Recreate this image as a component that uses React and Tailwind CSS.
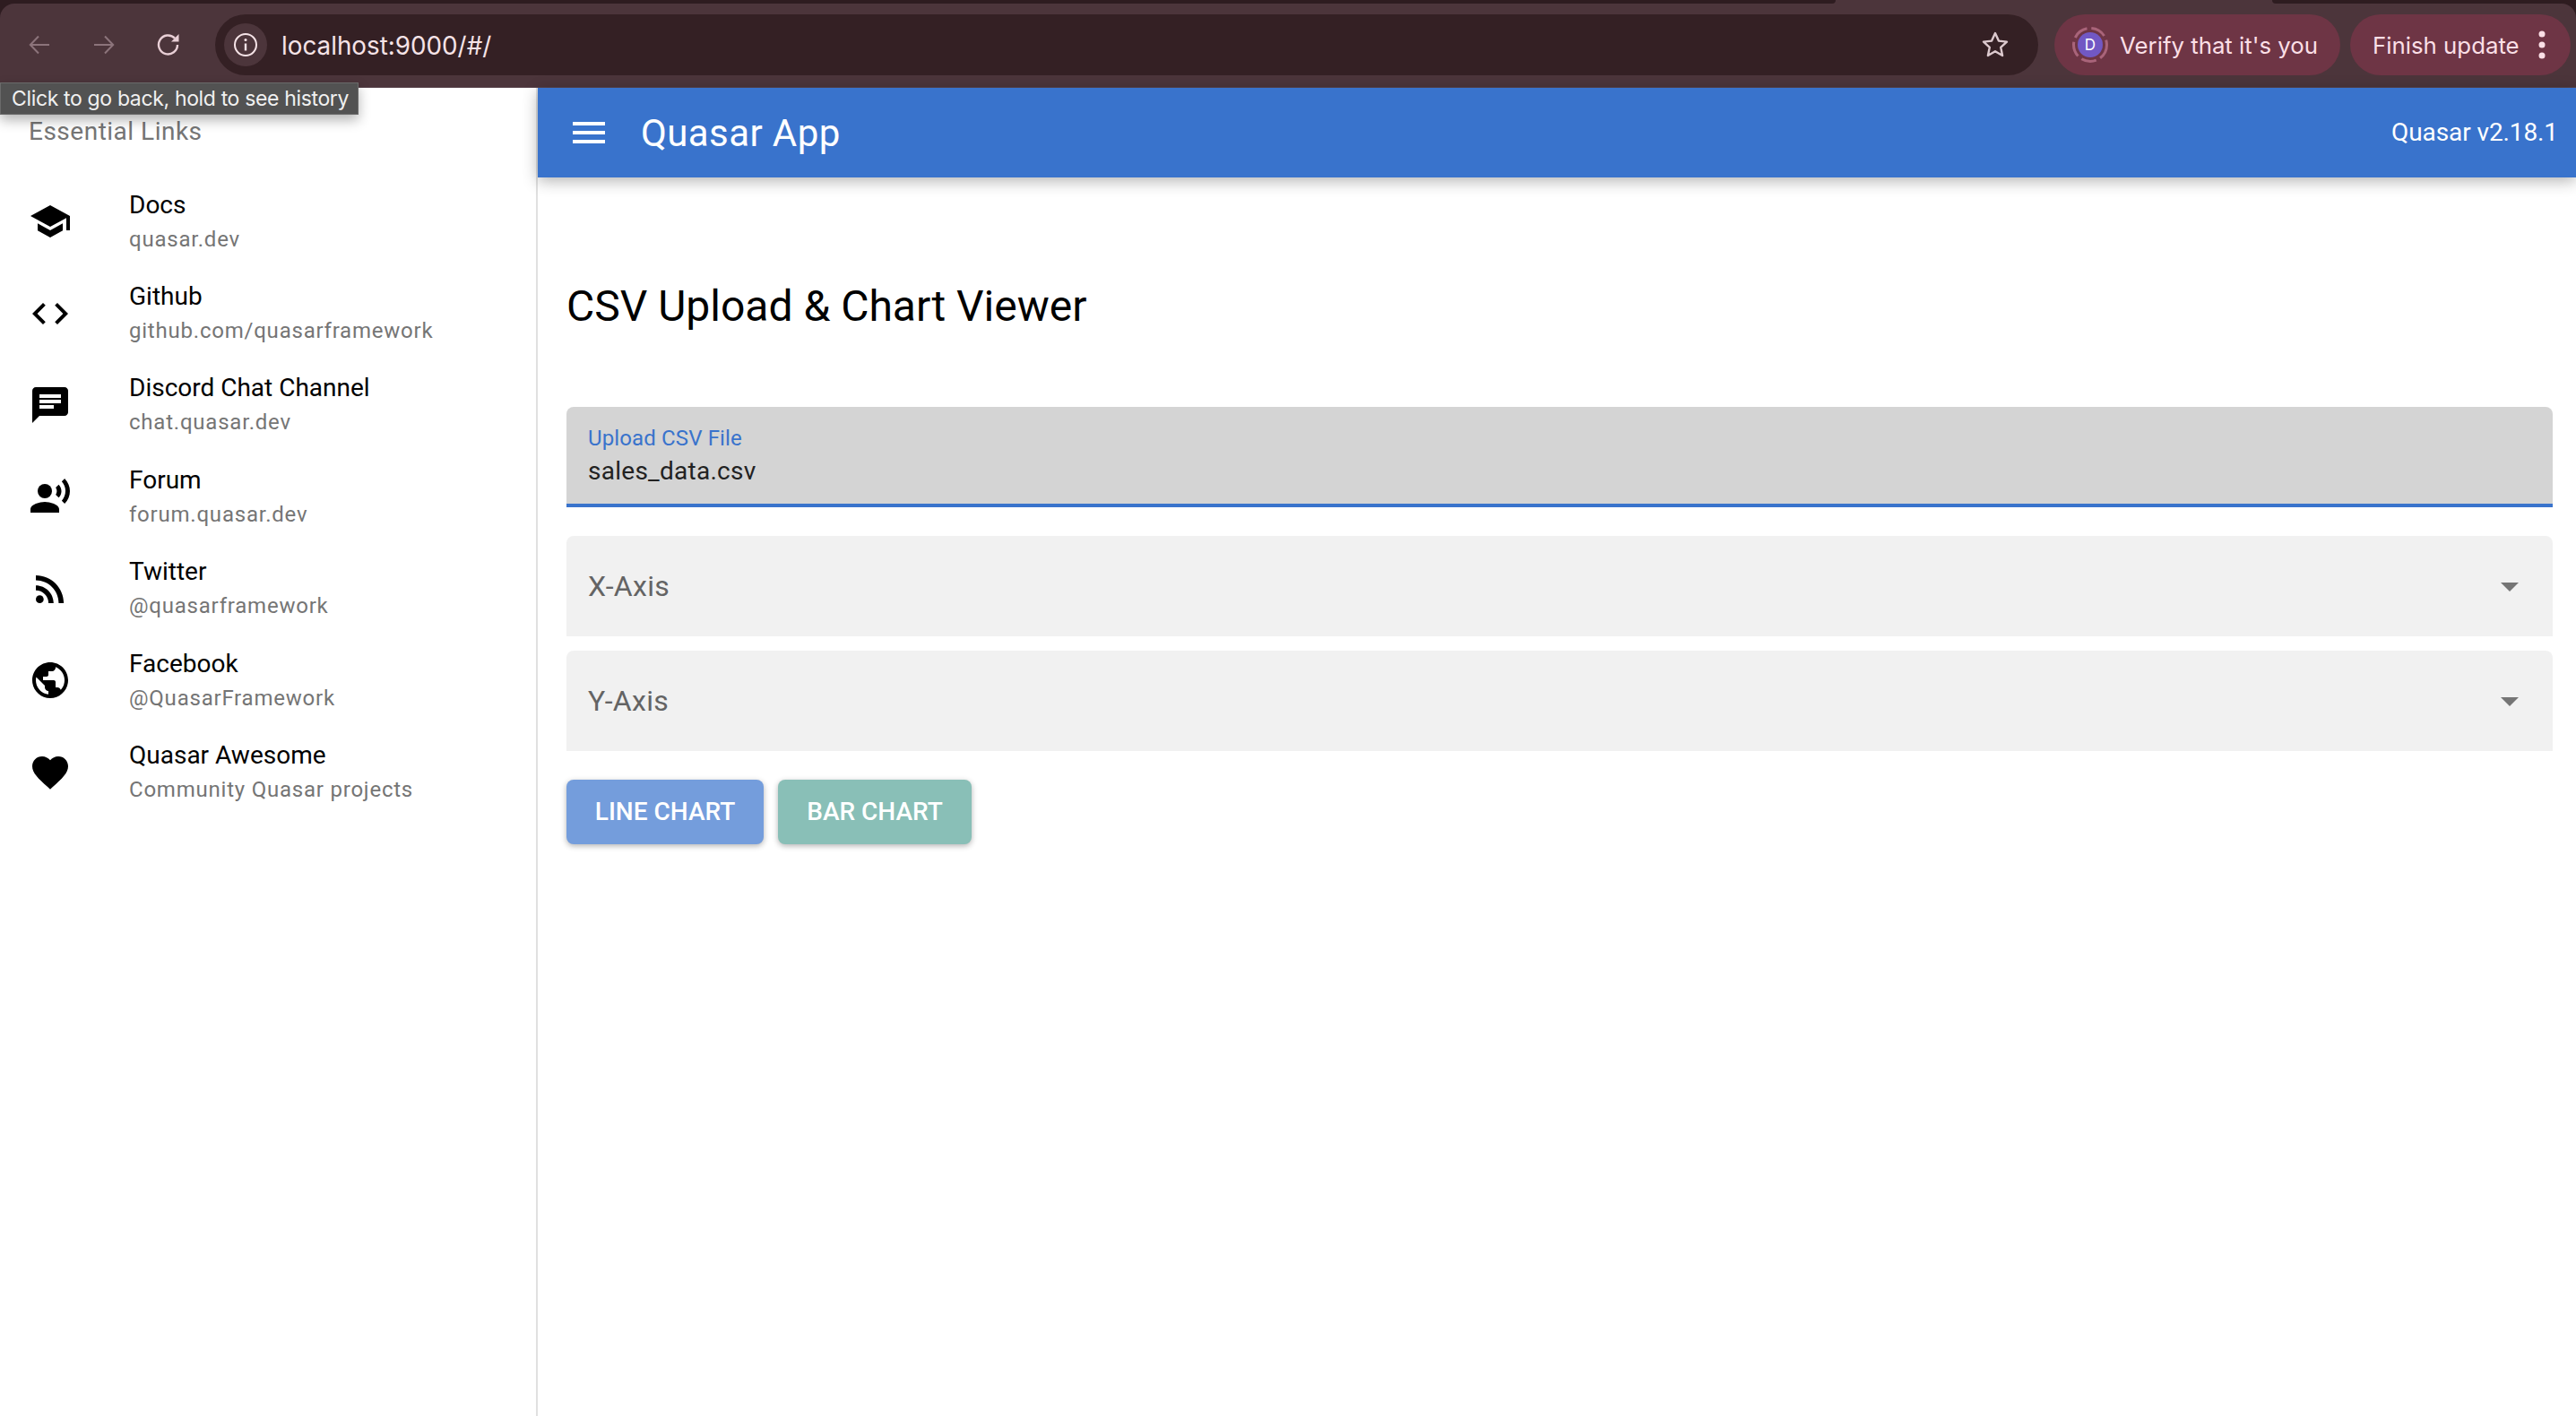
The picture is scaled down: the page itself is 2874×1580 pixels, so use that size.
import React from 'react';

const links = [
  { title: 'Docs', caption: 'quasar.dev', icon: 'school' },
  { title: 'Github', caption: 'github.com/quasarframework', icon: 'code' },
  { title: 'Discord Chat Channel', caption: 'chat.quasar.dev', icon: 'chat' },
  { title: 'Forum', caption: 'forum.quasar.dev', icon: 'voice' },
  { title: 'Twitter', caption: '@quasarframework', icon: 'rss' },
  { title: 'Facebook', caption: '@QuasarFramework', icon: 'public' },
  { title: 'Quasar Awesome', caption: 'Community Quasar projects', icon: 'favorite' },
];

// material icon shapes
const MaterialIcon = ({ name }) => (
  <svg viewBox="0 0 24 24" className="w-12 h-12 shrink-0" fill="currentColor">
    {name === 'school' && <path d="M5 13.18v4L12 21l7-3.82v-4L12 17l-7-3.82zM12 3L1 9l11 6 9-4.91V17h2V9L12 3z" />}
    {name === 'code' && <path d="M9.4 16.6L4.8 12l4.6-4.6L8 6l-6 6 6 6 1.4-1.4zm5.2 0l4.6-4.6-4.6-4.6L16 6l6 6-6 6-1.4-1.4z" />}
    {name === 'chat' && <path d="M20 2H4c-1.1 0-1.99.9-1.99 2L2 22l4-4h14c1.1 0 2-.9 2-2V4c0-1.1-.9-2-2-2zM6 9h12v2H6V9zm8 5H6v-2h8v2zm4-6H6V6h12v2z" />}
    {name === 'voice' && (
      <>
        <circle cx="9" cy="9" r="4" />
        <path d="M9 15c-2.67 0-8 1.34-8 4v2h16v-2c0-2.66-5.33-4-8-4zm7.76-9.64l-1.68 1.69c.84 1.18.84 2.71 0 3.89l1.68 1.69c2.02-2.02 2.02-5.07 0-7.27zM20.07 2l-1.63 1.63c2.77 3.02 2.77 7.56 0 10.74L20.07 16c3.9-3.89 3.91-9.95 0-14z" />
      </>
    )}
    {name === 'rss' && (
      <>
        <circle cx="6.18" cy="17.82" r="2.18" />
        <path d="M4 4.44v2.83c7.03 0 12.73 5.7 12.73 12.73h2.83c0-8.59-6.97-15.56-15.56-15.56zm0 5.66v2.83c3.9 0 7.07 3.17 7.07 7.07h2.83c0-5.47-4.43-9.9-9.9-9.9z" />
      </>
    )}
    {name === 'public' && <path d="M12 2C6.48 2 2 6.48 2 12s4.48 10 10 10 10-4.48 10-10S17.52 2 12 2zm-1 17.93c-3.95-.49-7-3.85-7-7.93 0-.62.08-1.21.21-1.79L9 15v1c0 1.1.9 2 2 2v1.93zm6.9-2.54c-.26-.81-1-1.39-1.9-1.39h-1v-3c0-.55-.45-1-1-1H8v-2h2c.55 0 1-.45 1-1V7h2c1.1 0 2-.9 2-2v-.41c2.93 1.19 5 4.06 5 7.41 0 2.08-.8 3.97-2.1 5.39z" />}
    {name === 'favorite' && <path d="M12 21.35l-1.45-1.32C5.4 15.36 2 12.28 2 8.5 2 5.42 4.42 3 7.5 3c1.74 0 3.41.81 4.5 2.09C13.09 3.81 14.76 3 16.5 3 19.58 3 22 5.42 22 8.5c0 3.78-3.4 6.86-8.55 11.54L12 21.35z" />}
  </svg>
);

const BrowserBar = () => (
  <div className="h-[98px] bg-[#2e1c20] font-['Inter',sans-serif]">
    <div className="h-1 flex bg-[#4c353b]">
      <div className="w-[2048px] bg-[#2e1c20] rounded-br-[6px]" />
      <div className="ml-[487px] flex-1 bg-[#2e1c20] rounded-bl-[6px]" />
    </div>
    <div className="h-[94px] pb-[14px] pt-3 pl-[32px] pr-[6px] flex items-center bg-[#4c353b] rounded-t-[16px] border-b border-[#57424a]">
      <svg viewBox="0 0 24 24" className="w-6 h-6 shrink-0 text-[#8c747b]" fill="none" stroke="currentColor" strokeWidth="2">
        <path d="M23 12H2M11 2.5L1.8 12l9.2 9.500" />
      </svg>
      <svg viewBox="0 0 24 24" className="w-6 h-6 ml-12 shrink-0 text-[#8c747b]" fill="none" stroke="currentColor" strokeWidth="2">
        <path d="M1 12h21M13 2.500l9.200 9.500-9.200 9.500" />
      </svg>
      <svg viewBox="0 0 26 26" className="w-[26px] h-[26px] ml-[47px] shrink-0 text-[#e9cfd6]" fill="none" stroke="currentColor" strokeWidth="2.400">
        <path d="M23 13a10.500 10.500 0 1 1-3-7.400" />
        <path d="M24.500 1v8.500H16" fill="currentColor" stroke="none" />
      </svg>
      {/* omnibox */}
      <div className="ml-[39px] w-[2034px] h-[68px] rounded-full bg-[#342024] flex items-center pl-[10px] pr-[32px] shrink-0">
        <div className="w-12 h-12 rounded-full bg-[#4c353b] flex items-center justify-center shrink-0">
          <svg viewBox="0 0 28 28" className="w-7 h-7 text-[#f5e3e7]" fill="none" stroke="currentColor" strokeWidth="2">
            <circle cx="14" cy="14" r="12" />
            <path d="M14 12.500v8" strokeWidth="2.400" />
            <circle cx="14" cy="8.500" r="1.500" fill="currentColor" stroke="none" />
          </svg>
        </div>
        <span className="ml-4 mt-1 text-[27.800px] text-[#f5e3e7]">localhost:9000/#/</span>
        <svg viewBox="0 0 32 32" className="w-8 h-8 ml-auto text-[#dcc9ce]" fill="none" stroke="currentColor" strokeWidth="2.400" strokeLinejoin="round">
          <path d="M16 3l3.900 8.600 9.100 1-6.800 6.200 1.900 9.200-8.100-4.700-8.100 4.700 1.900-9.200L3 12.600l9.100-1z" />
        </svg>
      </div>
      {/* profile chips */}
      <div className="ml-[18px] w-[319px] h-[68px] rounded-full bg-[#6e3545] flex items-center pl-5 shrink-0">
        <svg viewBox="0 0 40 40" className="w-10 h-10 shrink-0">
          <circle cx="20" cy="20" r="18.500" fill="none" stroke="#a9647a" strokeWidth="3" strokeDasharray="17 5" />
          <circle cx="20" cy="20" r="14" fill="#7158c4" />
          <text x="20" y="26" textAnchor="middle" fontSize="17" fill="#fff" fontFamily="Inter, sans-serif">D</text>
        </svg>
        <span className="ml-[13px] mt-1 text-[25.800px] text-[#fbdfe6] whitespace-nowrap">Verify that it's you</span>
      </div>
      <div className="ml-[11px] w-[246px] h-[68px] rounded-full bg-[#6e3545] flex items-center pl-[25px] shrink-0">
        <span className="mt-1 w-[162px] text-[25.800px] text-[#fbdfe6] whitespace-nowrap">Finish update</span>
        <svg viewBox="0 0 8 32" className="w-2 h-8 ml-[23px] text-[#fbdfe6]" fill="currentColor">
          <circle cx="4" cy="4" r="3.500" />
          <circle cx="4" cy="16" r="3.500" />
          <circle cx="4" cy="28" r="3.500" />
        </svg>
      </div>
    </div>
  </div>
);

const Sidebar = () => (
  <aside className="w-[600px] shrink-0 border-r-2 border-[#e0e0e0] bg-white">
    <div className="h-[98px] pl-8 flex items-center text-[28px] tracking-[0.5px] text-[#757575]">Essential Links</div>
    {links.map((link) => (
      <div key={link.title} className="h-[102.4px] pl-8 flex items-center">
        <MaterialIcon name={link.icon} />
        <div className="ml-[64px] pt-px">
          <div className="text-[28px] leading-8 text-black">{link.title}</div>
          <div className="mt-[6px] text-[24px] leading-8 tracking-[0.78px] text-[#757575]">{link.caption}</div>
        </div>
      </div>
    ))}
  </aside>
);

const SelectField = ({ label }) => (
  <div className="h-[112px] rounded-t-lg bg-[#f1f1f1] pl-6 pr-6 flex items-center justify-between">
    <span className="text-[32px] tracking-[0.3px] text-[#646464]">{label}</span>
    <svg viewBox="0 0 24 24" className="w-12 h-12 text-[#757575]" fill="currentColor">
      <path d="M7 10l5 5 5-5z" />
    </svg>
  </div>
);

export default function App() {
  return (
    <div className="relative h-[1580px] overflow-hidden bg-white font-['Roboto',sans-serif]">
      <BrowserBar />

      {/* back button tooltip */}
      <div className="absolute left-0 top-[92px] w-[400px] h-9 bg-[#525252] border border-[#6a6a6a] pl-3 flex items-center text-[23px] tracking-[-0.35px] text-[#f0f0f0] whitespace-nowrap shadow-[0_6px_14px_rgba(0,0,0,0.3)] font-['Inter',sans-serif]">
        Click to go back, hold to see history
      </div>

      <div className="flex h-[1482px]">
        <Sidebar />

        <div className="flex-1 min-w-0">
          <header className="h-[100px] bg-[#3973cc] text-white flex items-center pl-[33px] pr-5 shadow-[0_4px_16px_rgba(0,0,0,0.3)]">
            <svg viewBox="0 0 24 24" className="w-12 h-12 shrink-0" fill="currentColor">
              <path d="M3 18h18v-2H3v2zm0-5h18v-2H3v2zm0-7v2h18V6H3z" />
            </svg>
            <span className="ml-[34px] text-[42px] tracking-[0.4px]">Quasar App</span>
            <span className="ml-auto text-[28px] tracking-[-0.1px]">Quasar v2.18.1</span>
          </header>

          <main className="pl-8 pr-[26px] pt-[112px]">
            <h1 className="text-[48px] leading-[64px] text-black">CSV Upload &amp; Chart Viewer</h1>

            <div className="mt-20 h-[112px] rounded-t-lg bg-[#d4d4d4] border-b-4 border-[#3973cc] pl-6 pt-[21px]">
              <div className="text-[24px] leading-7 tracking-[0.13px] text-[#3973cc]">Upload CSV File</div>
              <div className="mt-[5px] text-[28px] leading-9 tracking-[0.26px] text-[#222222]">sales_data.csv</div>
            </div>

            <div className="mt-8 flex flex-col gap-4">
              <SelectField label="X-Axis" />
              <SelectField label="Y-Axis" />
            </div>

            <div className="mt-8 flex gap-4">
              <button className="w-[220px] h-[72px] rounded-lg bg-[#749ddc] text-white text-[28px] font-medium shadow-[0_2px_6px_rgba(0,0,0,0.3)]">LINE CHART</button>
              <button className="w-[216px] h-[72px] rounded-lg bg-[#89bfb7] text-white text-[28px] font-medium shadow-[0_2px_6px_rgba(0,0,0,0.3)]">BAR CHART</button>
            </div>
          </main>
        </div>
      </div>
    </div>
  );
}
